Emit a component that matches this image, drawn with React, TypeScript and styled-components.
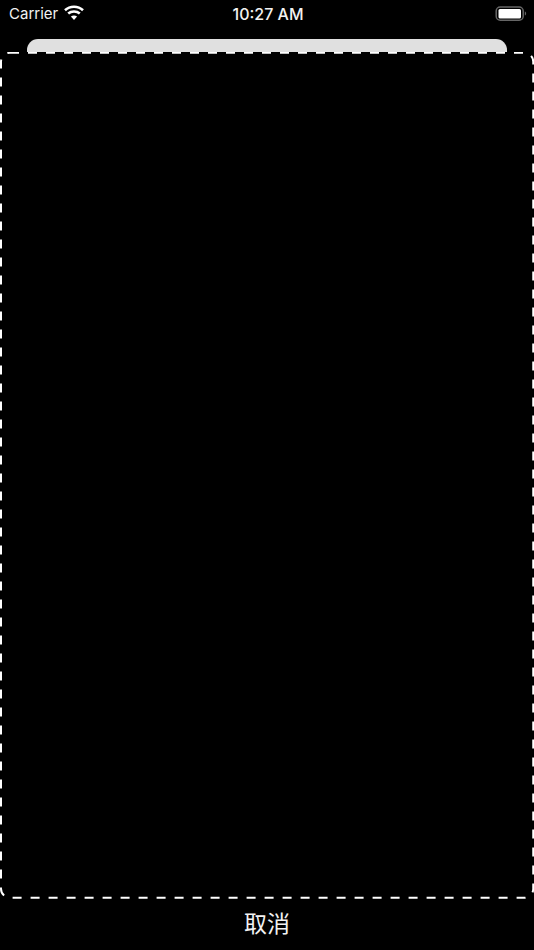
import styled, { createGlobalStyle } from "styled-components";

const GlobalStyle = createGlobalStyle`
  html, body {
    margin: 0;
    padding: 0;
    background: #000;
  }
`;

const Screen = styled.div`
  width: 534px;
  height: 950px;
  display: flex;
  flex-direction: column;
  background: #000;
  color: #fff;
  overflow: hidden;
`;

const StatusBar = styled.div`
  height: 39px;
  flex: none;
  display: grid;
  grid-template-columns: 1fr auto 1fr;
  align-items: start;
  padding: 5px 7px 0 9px;
  box-sizing: border-box;
  font-family: Inter, "Liberation Sans", sans-serif;
  font-size: 15px;
  line-height: 18px;
`;

const Carrier = styled.div`
  display: flex;
  align-items: flex-start;
  gap: 6px;
  color: #f2f2f2;
`;

const WifiSvg = styled.svg`
  display: block;
`;

const Clock = styled.div`
  font-size: 16px;
  font-weight: 500;
  color: #f2f2f2;
`;

const BatteryWrap = styled.div`
  display: flex;
  justify-content: flex-end;
  padding-top: 1px;
`;

const PeekCard = styled.div`
  flex: none;
  height: 14px;
  margin: 0 27px;
  background: #e0e0e0;
  border-radius: 11px 11px 0 0;
`;

const ScanFrame = styled.div`
  flex: none;
  position: relative;
  height: 847px;
  margin-top: -1px;
  background: #000;
`;

const FrameLine = styled.svg`
  position: absolute;
  inset: 0;
  display: block;
`;

const Footer = styled.div`
  flex: 1;
  display: flex;
  align-items: center;
  justify-content: center;
  padding-bottom: 6px;
`;

const CancelButton = styled.button`
  border: 0;
  padding: 0;
  background: none;
  color: #f2f2f2;
  font-family: "Noto Sans CJK SC", sans-serif;
  font-size: 23px;
  line-height: 30px;
`;

function WifiIcon() {
  return (
    <WifiSvg width="20" height="15" viewBox="0 0 20 15" fill="none" stroke="#fff" strokeWidth="2.6">
      <path d="M1 5.2C6 .5 14 .5 19 5.2" />
      <path d="M4.2 8.6C7.4 5.8 12.6 5.8 15.8 8.6" />
      <path d="M10 15 6.9 11.6C8.6 10.2 11.4 10.2 13.1 11.6Z" fill="#fff" stroke="none" />
    </WifiSvg>
  );
}

function BatteryIcon() {
  return (
    <svg width="32" height="15" viewBox="0 0 32 15" fill="none">
      <rect x="1.2" y="1" width="27" height="13.2" rx="4" stroke="#666" strokeWidth="1.5" />
      <rect x="3.5" y="3" width="22.5" height="9.4" rx="1.5" fill="#fff" />
      <path d="M29.8 5.6c.9.3 1.3 1 1.3 2s-.4 1.7-1.3 2Z" fill="#666" />
    </svg>
  );
}

export default function App() {
  return (
    <Screen>
      <GlobalStyle />
      <StatusBar>
        <Carrier>
          Carrier
          <WifiIcon />
        </Carrier>
        <Clock>10:27 AM</Clock>
        <BatteryWrap>
          <BatteryIcon />
        </BatteryWrap>
      </StatusBar>
      <PeekCard />
      <ScanFrame>
        <FrameLine width="534" height="847" viewBox="0 0 534 847" fill="none">
          <rect x="1" y="0.75" width="532.25" height="845" rx="9" stroke="#fff" strokeWidth="2" strokeDasharray="9 9" />
        </FrameLine>
      </ScanFrame>
      <Footer>
        <CancelButton>取消</CancelButton>
      </Footer>
    </Screen>
  );
}
